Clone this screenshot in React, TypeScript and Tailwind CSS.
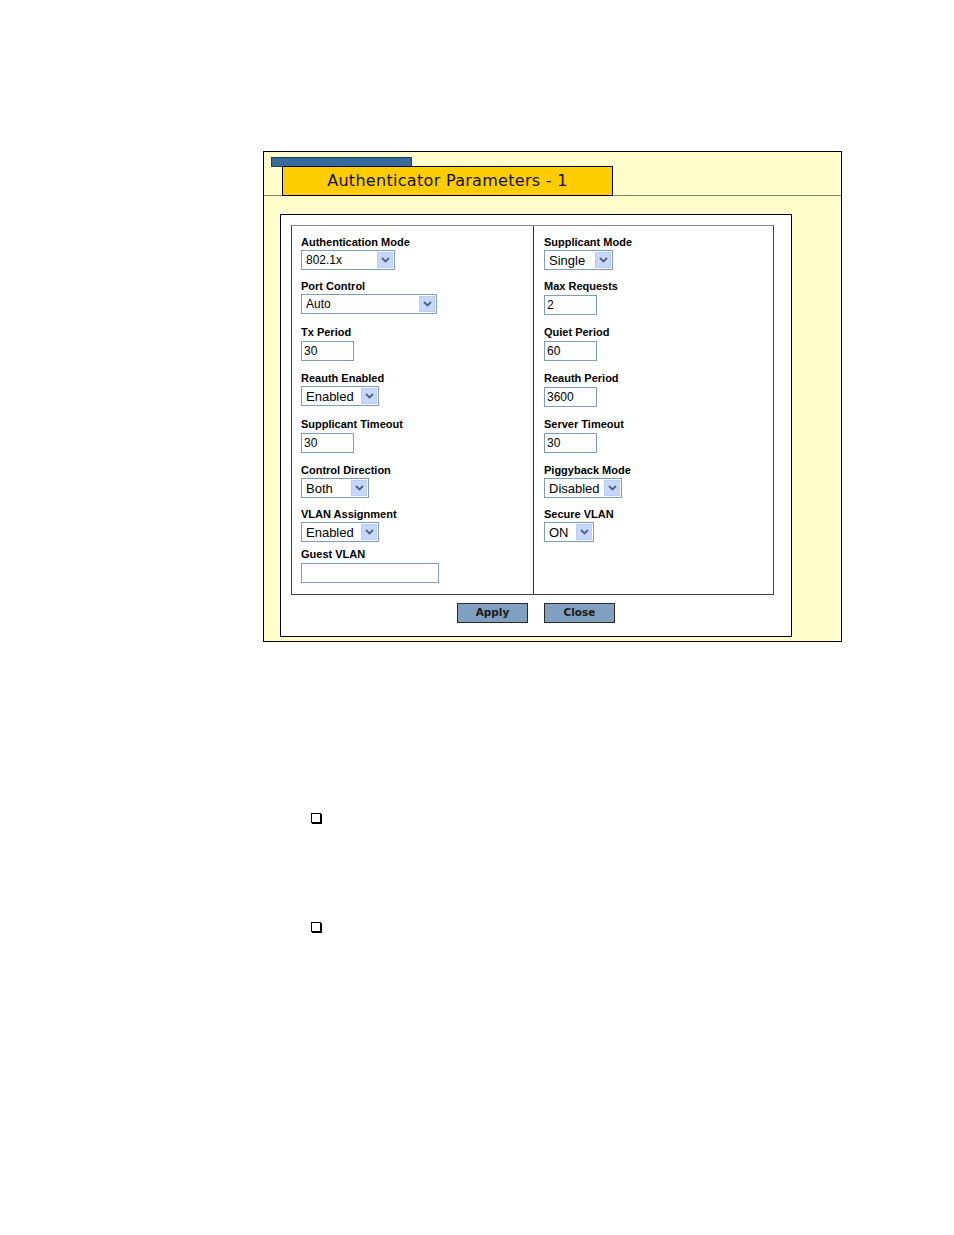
import React from "react";

const Arrow = () => (
  <span className="flex h-[16px] w-[16px] items-center justify-center border border-[#b9cdf5] bg-[#c6d7fb]">
    <svg width="9" height="6" viewBox="0 0 9 6">
      <path d="M1 1 L4.5 4.5 L8 1" fill="none" stroke="#4d6185" strokeWidth="1.8" />
    </svg>
  </span>
);

function Select({ value, width, size }: { value: string; width: number; size: "sm" | "md" }) {
  return (
    <div
      className="flex h-[20px] items-center justify-between border border-[#7f9db9] bg-white pl-[4px] pr-[1px] text-black"
      style={{ width }}
    >
      <span className={size === "sm" ? "text-[12px] leading-none" : "text-[13px] leading-none"}>{value}</span>
      <Arrow />
    </div>
  );
}

function Input({ value, width }: { value: string; width: number }) {
  return (
    <div
      className="mt-[1px] flex h-[20px] items-center border border-[#7f9db9] bg-white pl-[2px] text-[12px] leading-none text-black"
      style={{ width }}
    >
      {value}
    </div>
  );
}

function Field({ label, h, children }: { label: string; h: number; children?: React.ReactNode }) {
  return (
    <div className="flex flex-col" style={{ height: h }}>
      <div className="h-[14px] text-[11px] font-bold leading-[13px] text-black">{label}</div>
      {children}
    </div>
  );
}

const heights = [44, 46, 46, 46, 46, 44, 40, 40];

export default function App() {
  return (
    <div className="min-h-[1235px] w-[954px] bg-white" style={{ fontFamily: '"Liberation Sans", Arial, sans-serif' }}>
      <div className="ml-[263px] pt-[151px]">
        <div className="h-[491px] w-[579px] border border-black bg-[#ffffcc]">
          {/* header */}
          <div className="flex flex-col border-b border-[#80806a]">
            <div className="ml-[7px] mt-[5px] h-[10px] w-[141px] border border-[#1f3d5c] bg-[#356a99]" />
            <div
              className="-mb-[1px] -mt-[1px] ml-[18px] flex h-[30px] w-[331px] items-center justify-center border border-black bg-[#ffcc00] text-[16px] tracking-[0.3px] text-[#111]"
              style={{ fontFamily: '"DejaVu Sans", Verdana, sans-serif' }}
            >
              Authenticator Parameters - 1
            </div>
          </div>
          {/* white box */}
          <div className="ml-[16px] mt-[18px] h-[423px] w-[512px] border border-black bg-white px-[10px] pt-[10px]">
            <div className="flex h-[370px] w-[483px] border border-[#404040] border-t-[#8a8a8a]">
              <div className="w-[242px] border-r border-[#303030] pl-[9px] pt-[10px]">
                <Field label="Authentication Mode" h={heights[0]}>
                  <Select value="802.1x" width={94} size="sm" />
                </Field>
                <Field label="Port Control" h={heights[1]}>
                  <Select value="Auto" width={136} size="sm" />
                </Field>
                <Field label="Tx Period" h={heights[2]}>
                  <Input value="30" width={53} />
                </Field>
                <Field label="Reauth Enabled" h={heights[3]}>
                  <Select value="Enabled" width={78} size="md" />
                </Field>
                <Field label="Supplicant Timeout" h={heights[4]}>
                  <Input value="30" width={53} />
                </Field>
                <Field label="Control Direction" h={heights[5]}>
                  <Select value="Both" width={68} size="md" />
                </Field>
                <Field label="VLAN Assignment" h={heights[6]}>
                  <Select value="Enabled" width={78} size="md" />
                </Field>
                <Field label="Guest VLAN" h={heights[7]}>
                  <Input value="" width={138} />
                </Field>
              </div>
              <div className="flex-1 pl-[10px] pt-[10px]">
                <Field label="Supplicant Mode" h={heights[0]}>
                  <Select value="Single" width={69} size="md" />
                </Field>
                <Field label="Max Requests" h={heights[1]}>
                  <Input value="2" width={53} />
                </Field>
                <Field label="Quiet Period" h={heights[2]}>
                  <Input value="60" width={53} />
                </Field>
                <Field label="Reauth Period" h={heights[3]}>
                  <Input value="3600" width={53} />
                </Field>
                <Field label="Server Timeout" h={heights[4]}>
                  <Input value="30" width={53} />
                </Field>
                <Field label="Piggyback Mode" h={heights[5]}>
                  <Select value="Disabled" width={78} size="md" />
                </Field>
                <Field label="Secure VLAN" h={heights[6]}>
                  <Select value="ON" width={50} size="md" />
                </Field>
              </div>
            </div>
            <div className="mt-[8px] flex justify-center gap-[16px]">
              {["Apply", "Close"].map((t) => (
                <div
                  key={t}
                  className="flex h-[20px] w-[71px] items-center justify-center border border-[#2a2a2a] bg-[#819fbf] text-[10.5px] font-bold text-[#1a1a1a]"
                  style={{ fontFamily: '"DejaVu Sans", Verdana, sans-serif' }}
                >
                  {t}
                </div>
              ))}
            </div>
          </div>
        </div>
        {/* bullets */}
        <div className="ml-[48px] flex flex-col">
          <div className="mt-[171px] h-[10px] w-[10px] border border-black shadow-[1px_1px_0_#000]" />
          <div className="mt-[99px] h-[10px] w-[10px] border border-black shadow-[1px_1px_0_#000]" />
        </div>
      </div>
    </div>
  );
}
